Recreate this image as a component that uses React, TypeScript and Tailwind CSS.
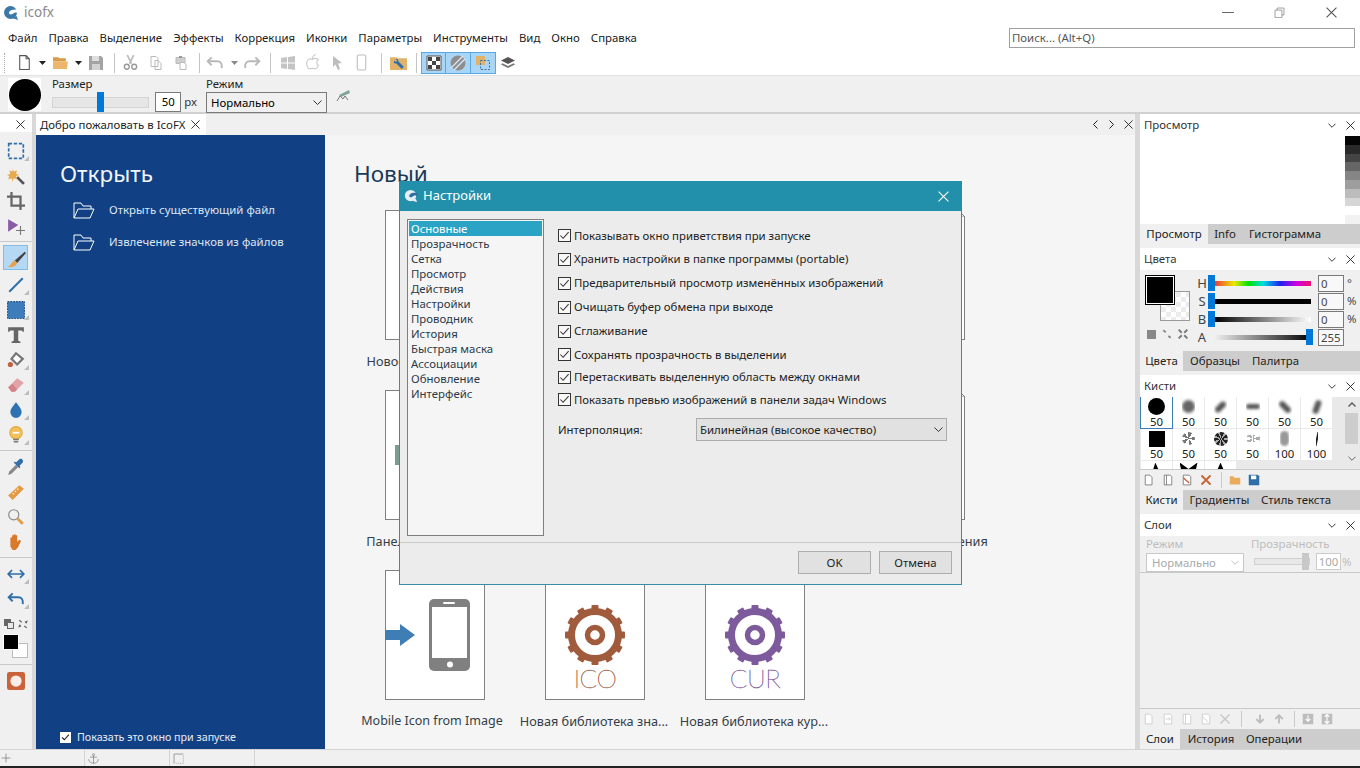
import type { ReactNode } from 'react';

const FONT = "font-['Noto_Sans','Open_Sans',sans-serif]";

function Svg({ size = 16, className = '', children }: { size?: number; className?: string; children: ReactNode }) {
  return (
    <svg width={size} height={size} viewBox="0 0 16 16" fill="none" className={`shrink-0 ${className}`}>
      {children}
    </svg>
  );
}

function CloseX({ size = 10, color = '#222' }: { size?: number; color?: string }) {
  return (
    <svg width={size} height={size} viewBox="0 0 10 10" className="shrink-0">
      <path d="M0.5 0.5L9.5 9.5M9.5 0.5L0.5 9.5" stroke={color} strokeWidth="1" />
    </svg>
  );
}

function Chevron({ w = 9, color = '#333' }: { w?: number; color?: string }) {
  return (
    <svg width={w} height={5} viewBox="0 0 9 5" className="shrink-0">
      <path d="M0.5 0.5L4.5 4.5L8.5 0.5" stroke={color} fill="none" strokeWidth="1" />
    </svg>
  );
}

function Logo({ size = 16, body = '#3a78a8', wave = '#fff' }: { size?: number; body?: string; wave?: string }) {
  return (
    <svg width={size} height={size} viewBox="0 0 16 16" className="shrink-0">
      <circle cx="7.500" cy="7.500" r="6.500" fill={body} />
      <path d="M6 7c2-3 6-3 10-2v3c-3-1-5-.5-6.500 1C8 10 5.500 9.500 6 7z" fill={wave} />
      <path d="M9 13l6 2-1.500-4z" fill={body} />
    </svg>
  );
}

function Sep() {
  return <div className="w-px h-[20px] bg-[#c4c4c4] shrink-0" />;
}

function Caret({ color = '#222' }: { color?: string }) {
  return (
    <svg width="7" height="4" viewBox="0 0 7 4" className="shrink-0">
      <path d="M0 0h7L3.500 4z" fill={color} />
    </svg>
  );
}

function Slot({ w = 25, children, cls = '' }: { w?: number; children: ReactNode; cls?: string }) {
  return (
    <div className={`flex items-center justify-center h-[22px] shrink-0 ${cls}`} style={{ width: w }}>
      {children}
    </div>
  );
}

function TopToolbar() {
  const dis = '#b9b9b9';
  return (
    <div className="h-[25px] flex items-center bg-white pl-[4px] shrink-0">
      <div className="w-[2px] h-[20px] border-l border-dotted border-[#aaa] mr-[9px]" />
      <Slot w={18}>
        <Svg size={17}><path d="M3.500 1.500h6l3 3v10h-9z M9.500 1.500v3h3" stroke="#555" fill="#fff" /></Svg>
      </Slot>
      <Slot w={18}><Caret /></Slot>
      <Slot w={18}>
        <Svg size={17}><path d="M1 3h5l1 1h6v3H1z" fill="#d99a4a" /><path d="M1 7h14l-1 7H1z" fill="#edb66b" /></Svg>
      </Slot>
      <Slot w={18}><Caret /></Slot>
      <Slot w={18}>
        <Svg><path d="M1 1h12l2 2v12H1z" fill="#a4a4a4" /><rect x="4" y="1" width="7" height="5" fill="#dedede" /><rect x="4" y="9" width="8" height="6" fill="#d2d2d2" /></Svg>
      </Slot>
      <Slot w={18}><Sep /></Slot>
      <Slot w={15}>
        <Svg size={17}><path d="M5 1l4 8M11 1L7 9" stroke={dis} strokeWidth="1.500" /><circle cx="4.500" cy="12" r="2.300" stroke="#999" strokeWidth="1.300" /><circle cx="11.500" cy="12" r="2.300" stroke="#999" strokeWidth="1.300" /></Svg>
      </Slot>
      <Slot w={25} cls="ml-[5px]">
        <Svg><path d="M3 1.500h5l2 2v8H3z M7 5.500h3l3 3v6H7z" stroke={dis} fill="#fff" /></Svg>
      </Slot>
      <Slot w={25}>
        <Svg><path d="M3 2.500h9v6H3z" fill="#cfcfcf" stroke={dis} /><path d="M6 1h3v2H6z" fill="#999" /><path d="M7 7.500h4l2 2v5H7z" fill="#fff" stroke={dis} /></Svg>
      </Slot>
      <Slot w={12}><Sep /></Slot>
      <Slot w={18} cls="ml-[1px]">
        <Svg size={18}><path d="M5 3L1.500 6.500 5 10M2 6.500h8c3 0 4.500 2 4 6" stroke={dis} strokeWidth="1.700" /></Svg>
      </Slot>
      <Slot w={20}><Caret color="#888" /></Slot>
      <Slot w={16}>
        <Svg size={18}><path d="M11 3l3.500 3.500L11 10M14 6.500H6c-3 0-4.500 2-4 6" stroke={dis} strokeWidth="1.700" /></Svg>
      </Slot>
      <Slot w={20}><Sep /></Slot>
      <Slot w={25} cls="ml-[-5px]">
        <Svg><path d="M1 3l6-1v5.500H1zM8 2l7-1v6.500H8zM1 8.500h6V14l-6-1zM8 8.500h7V15l-7-1z" fill="#c4c4c4" /></Svg>
      </Slot>
      <Slot w={25}>
        <Svg size={17}><path d="M8 5C6 4 3 5 2.500 8c-.3 3 1.500 6 3 6 1 0 1.500-.5 2.500-.5s1.500.5 2.500.5c1.200 0 2.300-1.500 3-3.500-2-1-2-4 0-5-1-1.500-3.500-1.500-5.500-.5zM8 4.500c0-2 1-3.500 3-4" stroke="#c8c8c8" /></Svg>
      </Slot>
      <Slot w={24}>
        <Svg><path d="M4 1l9 7-4 .5 2 5.500-2 1-2.500-5.500L4 12z" fill="#bdbdbd" /></Svg>
      </Slot>
      <Slot w={25}>
        <Svg size={17}><rect x="4" y="1" width="8" height="14" rx="1.500" stroke="#bbb" fill="#fff" /></Svg>
      </Slot>
      <Slot w={14}><Sep /></Slot>
      <Slot w={18} cls="ml-[1px]">
        <Svg size={17}><path d="M0 3h6l1 1h9v11H0z" fill="#e0b26a" /><path d="M5 5c2-1 3 0 3 2l5 5-2 2-5-5c-2 0-3-1-2-3l1.500 1.500L7 6z" fill="#2f6ea8" /></Svg>
      </Slot>
      <Slot w={18}><Sep /></Slot>
      <div className="flex h-[22px] w-[75px] border border-[#5aa7e6] bg-[#a9d5f7] ml-[-4px] shrink-0">
        <div className="w-[25px] flex items-center justify-center border-r border-[#5aa7e6]">
          <Svg><path d="M1 1h14v14H1z" fill="#fff" stroke="#555" /><path d="M2 2h4v4H2zM10 2h4v4h-4zM6 6h4v4H6zM2 10h4v4H2zM10 10h4v4h-4z" fill="#444" /></Svg>
        </div>
        <div className="w-[25px] flex items-center justify-center border-r border-[#5aa7e6]">
          <Svg><circle cx="8" cy="8" r="7.500" fill="#8e8e8e" /><path d="M1 13L13 1M4 15L15 4" stroke="#d9ecfb" strokeWidth="1.200" /></Svg>
        </div>
        <div className="w-[25px] flex items-center justify-center">
          <Svg><rect x="1" y="1" width="9" height="9" fill="#e0b26a" /><rect x="5.500" y="5.500" width="9" height="9" stroke="#3f6f9f" strokeDasharray="2 1.500" /></Svg>
        </div>
      </div>
      <Slot w={24}>
        <Svg><path d="M8 2l7 3.500L8 9 1 5.500z" fill="#555" /><path d="M2.500 8.300L1 9.500 8 13l7-3.500-1.500-1.200L8 11z" fill="#777" /></Svg>
      </Slot>
    </div>
  );
}

function ToolOptions() {
  return (
    <div className="h-[39px] bg-[#f0f0f0] border-t border-[#e2e2e2] border-b-2 border-b-[#d0d0d0] flex pl-[8px] shrink-0">
      <div className="w-[33px] h-[33px] mt-[2px] bg-white flex items-center justify-center shrink-0">
        <div className="w-[32px] h-[32px] rounded-full bg-black" />
      </div>
      <div className="ml-[11px] w-[145px] shrink-0">
        <div className="text-[11.4px] leading-[14px] mt-[1px] text-[#222]">Размер</div>
        <div className="flex items-center mt-[1px]">
          <div className="relative w-[98px] h-[11px] bg-[#e6e6e6] border border-[#d4d4d4]">
            <div className="absolute left-[44px] top-[-6px] w-[7px] h-[20px] bg-[#0078d7]" />
          </div>
          <div className="ml-[6px] w-[26px] h-[20px] border border-[#7a7a7a] bg-white text-[11.4px] leading-[18px] text-center">50</div>
          <div className="ml-[3px] text-[11.4px] text-[#333]">px</div>
        </div>
      </div>
      <div className="ml-[9px] w-[121px] shrink-0">
        <div className="text-[11.4px] leading-[14px] mt-[1px] text-[#222]">Режим</div>
        <div className="mt-[1px] h-[21px] border border-[#7a7a7a] bg-[#f0f0f0] flex items-center justify-between pl-[4px] pr-[4px] text-[11.4px]">
          <span>Нормально</span>
          <Chevron />
        </div>
      </div>
      <div className="ml-[9px] mt-[11px]">
        <Svg>
          <path d="M1 14l3-5 3 3 2-3 3 4" stroke="#777" />
          <path d="M3 8l10-5 1 3-9 4z" fill="#7fa596" />
        </Svg>
      </div>
    </div>
  );
}

function LeftTools() {
  const Tool = ({ children, corner = false, active = false, h = 25 }: { children: ReactNode; corner?: boolean; active?: boolean; h?: number }) => (
    <div className="relative flex items-center justify-center shrink-0 w-full" style={{ height: h }}>
      {active && <div className="absolute left-[3px] top-0 w-[25px] h-[25px] bg-[#b5d9f5] border border-[#7ebcea]" />}
      <div className="relative">{children}</div>
      {corner && <div className="absolute right-[3px] bottom-[2px] w-0 h-0 border-l-[5px] border-l-transparent border-b-[5px] border-b-[#bcbcbc]" />}
    </div>
  );
  const Line = () => <div className="h-px my-[3px] bg-[#c9c9c9] shrink-0" />;
  return (
    <div className="w-[36px] shrink-0 flex flex-col bg-[#f0f0f0] border-r-4 border-[#d8d8d8]">
      <div className="h-[18px] bg-white flex items-center justify-center pl-[8px] pt-[3px] shrink-0">
        <CloseX size={9} />
      </div>
      <div className="h-[6px] shrink-0" />
      <Tool corner><Svg size={18}><rect x="1.500" y="1.500" width="13" height="13" stroke="#2f6ea8" strokeWidth="1.500" strokeDasharray="3 1.500" /></Svg></Tool>
      <Tool>
        <Svg size={18}><path d="M9 9l6 6" stroke="#555" strokeWidth="2.500" /><path d="M5 1l1 3 3-1-1 3 3 1-3 1 1 3-3-1-1 3-1-3-3 1 1-3-2-1 3-1-1-3 3 1z" fill="#e9a94f" /></Svg>
      </Tool>
      <Tool>
        <Svg size={18}><path d="M4 0v12h12M0 4h12v12" stroke="#666" strokeWidth="2" /></Svg>
      </Tool>
      <Tool>
        <Svg size={18}><path d="M1 2l9 5-9 6z" fill="#8a5aa8" /><path d="M12 8v8M8 12h8" stroke="#777" /></Svg>
      </Tool>
      <Line />
      <Tool active corner={false}>
        <Svg size={20}><path d="M7 10L15 3l1 1-7 8z" fill="#444" /><path d="M1 15c3 0 3-4 6-5l2 2c-1 3-5 4-8 3z" fill="#e5a050" /></Svg>
      </Tool>
      <div className="h-[2px] shrink-0" />
      <Tool corner><Svg size={18}><path d="M2 14L14 2" stroke="#2f6ea8" strokeWidth="1.700" /></Svg></Tool>
      <Tool corner><Svg size={18}><rect x="0.500" y="0.500" width="15" height="15" fill="#3f7cbc" stroke="#1f4f86" strokeDasharray="1.500 1" /></Svg></Tool>
      <Tool><Svg size={18}><path d="M1 1h14v4h-1l-1-1H10v9l2 1v1H4v-1l2-1V4H3L2 5H1z" fill="#666" /></Svg></Tool>
      <Tool corner><Svg size={18}><path d="M8 2l6 5-5 5-5-5z" fill="#fff" stroke="#777" strokeWidth="2" /><circle cx="3" cy="12" r="2.300" fill="#c5603c" /></Svg></Tool>
      <Tool corner><Svg size={18}><path d="M1 10l8-8 6 4-8 8H4z" fill="#e2a3a8" /><path d="M1 10l3 4h3l2-2-4-5z" fill="#d08488" /></Svg></Tool>
      <Tool corner><Svg size={18}><path d="M8 1c3 4 5 6 5 9a5 5 0 0 1-10 0c0-3 2-5 5-9z" fill="#2f72b2" /></Svg></Tool>
      <Tool corner>
        <Svg size={18}><circle cx="8" cy="6" r="5.500" fill="#f1c15b" stroke="#e0a93c" /><path d="M5 6h6" stroke="#fff" strokeWidth="1.500" /><path d="M5.500 12h5M6 14h4" stroke="#777" strokeWidth="1.500" /></Svg>
      </Tool>
      <Line />
      <Tool><Svg size={18}><path d="M1 15l1-3 6-6 2 2-6 6z" fill="#888" /><path d="M8 4l3-3c2-1 4 1 3 3l-3 3 1 1-1 1-5-5 1-1z" fill="#2f6ea8" /></Svg></Tool>
      <Tool><Svg size={18}><path d="M1 11L11 2l4 3-10 10z" fill="#e29a45" /><path d="M5 9l1 1M7 7l1 1M9 5l1 1" stroke="#fff" /></Svg></Tool>
      <Tool><Svg size={18}><circle cx="6" cy="6" r="4.500" stroke="#888" /><path d="M9.500 9.500L14 14" stroke="#e29a45" strokeWidth="2.500" /></Svg></Tool>
      <Tool><Svg size={18}><path d="M3 8V4h1.500v3V2H6v5V1h1.500v6V2H9v6l2-2 1.500 1-3 6-2 2H5l-2-3z" fill="#d9792c" /></Svg></Tool>
      <Line />
      <Tool corner><Svg size={18}><path d="M1 8h14M4.500 4.500L1 8l3.500 3.500M11.500 4.500L15 8l-3.500 3.500" stroke="#2f6ea8" strokeWidth="1.500" /></Svg></Tool>
      <Tool corner><Svg size={18}><path d="M5 3L1.500 6.500 5 10M2 6.500h8c3 0 4.500 2 4 6" stroke="#2f6ea8" strokeWidth="1.700" /></Svg></Tool>
      <div className="relative h-[50px] shrink-0">
        <div className="absolute left-[4px] top-[8px] w-[7px] h-[7px] bg-[#666]" />
        <div className="absolute left-[7px] top-[11px] w-[7px] h-[7px] bg-[#e8e8e8] border border-[#666]" />
        <div className="absolute left-[18px] top-[8px]">
          <Svg size={10}><path d="M2 2l4 3M14 14l-4-3M3 9l-1 3 3-1M13 7l1-3-3 1" stroke="#666" strokeWidth="2" /></Svg>
        </div>
        <div className="absolute left-[12px] top-[32px] w-[16px] h-[15px] bg-white border border-[#bbb]" />
        <div className="absolute left-[3px] top-[23px] w-[16px] h-[16px] bg-black border border-white" />
      </div>
      <Line />
      <Tool>
        <svg width="18" height="18" viewBox="0 0 16 16"><rect x="0" y="0" width="16" height="16" rx="2" fill="#c9633a" /><circle cx="8" cy="8" r="5" fill="#fbeee8" /></svg>
      </Tool>
    </div>
  );
}

function Gear({ color }: { color: string }) {
  const teeth = [0, 30, 60, 90, 120, 150, 180, 210, 240, 270, 300, 330];
  return (
    <svg width="62" height="62" viewBox="0 0 62 62" className="shrink-0">
      {teeth.map((a) => (
        <rect key={a} x="27.500" y="1" width="7" height="8" rx="1" fill={color} transform={`rotate(${a} 31 31)`} />
      ))}
      <circle cx="31" cy="31" r="23.500" fill="none" stroke={color} strokeWidth="7" />
      <circle cx="31" cy="31" r="7.500" fill="none" stroke={color} strokeWidth="5.500" />
    </svg>
  );
}

function Card({ label, latin = false, children }: { label?: string; latin?: boolean; children?: ReactNode }) {
  return (
    <div className="w-[100px]">
      <div className="relative w-[100px] h-[130px] bg-white border border-[#808080] flex flex-col items-center">
        <div className="absolute right-[-1px] top-[-1px] w-[7px] h-[7px] bg-[#f5f5f5]" />
        <svg width="7" height="7" viewBox="0 0 7 7" className="absolute right-[-1px] top-[-1px]">
          <path d="M0 0L7 7H0z" fill="#fff" />
          <path d="M0 0L7 7M0 0V7H7" stroke="#808080" fill="none" />
        </svg>
        {children}
      </div>
      {label && (
        <div className={`w-[160px] mt-[12px] text-center leading-[18px] text-[#333e48] whitespace-nowrap ${latin ? 'ml-[-33px] text-[12.5px]' : 'ml-[-31px] text-[12.7px]'}`}>{label}</div>
      )}
    </div>
  );
}

function Welcome() {
  const Folder = () => (
    <svg width="22" height="17" viewBox="0 0 22 17" className="shrink-0">
      <path d="M1 16V1h7l2 3h8v3M1 16l4-9h16l-4 9z" fill="none" stroke="#fff" strokeWidth="1" />
    </svg>
  );
  return (
    <div className="flex-1 flex min-h-0">
      <div className="w-[289px] bg-[#114084] shrink-0 flex flex-col text-white pl-[24px]">
        <div className="text-[22.5px] leading-[32px] mt-[23px] text-[#f2f6fb]">Открыть</div>
        <div className="flex items-center mt-[10px] ml-[13px] h-[20px]">
          <Folder />
          <span className="ml-[14px] text-[11.4px] text-[#dde6f2]">Открыть существующий файл</span>
        </div>
        <div className="flex items-center mt-[12px] ml-[13px] h-[20px]">
          <Folder />
          <span className="ml-[14px] text-[11.4px] text-[#dde6f2]">Извлечение значков из файлов</span>
        </div>
        <div className="mt-auto mb-[3px] flex items-center h-[18px]">
          <div className="w-[11px] h-[11px] bg-white flex items-center justify-center">
            <Svg size={9}><path d="M2 8l4 4 8-9" stroke="#222" strokeWidth="2" /></Svg>
          </div>
          <span className="ml-[6px] text-[10.7px] text-[#e6ecf5]">Показать это окно при запуске</span>
        </div>
      </div>
      <div className="flex-1 bg-[#f5f5f5] pl-[29px]">
        <div className="text-[22.5px] leading-[32px] mt-[23px] text-[#173a55]">Новый</div>
        <div className="mt-[20px] ml-[31px] grid grid-cols-[100px_100px_100px_100px] gap-x-[60px] gap-y-[20px] overflow-visible">
          <Card label="Новое изображение..." />
          <Card />
          <Card />
          <Card />
          <Card label="Панель инструментов">
            <div className="absolute left-[9px] top-[54px] w-[6px] h-[20px] bg-[#7a9c8f]" />
          </Card>
          <Card />
          <Card />
          <Card label="Значок из изображения" />
          <Card label="Mobile Icon from Image" latin>
            <svg width="100" height="128" viewBox="0 0 100 128">
              <path d="M0 59h15v-6l15 11-15 11v-6H0z" fill="#3f7db5" />
              <rect x="44" y="28" width="41" height="72" rx="5" fill="#808080" />
              <rect x="47" y="36" width="35" height="51" fill="#fff" />
              <rect x="58" y="31" width="12" height="2" rx="1" fill="#fff" />
              <circle cx="65" cy="93.500" r="3" fill="#fff" />
            </svg>
          </Card>
          <Card label="Новая библиотека зна...">
            <div className="mt-[33px]"><Gear color="#a05a3c" /></div>
            <div className="font-['Lato',sans-serif] font-thin text-[26px] leading-[28px] mt-[-2px] text-[#a05a3c] tracking-[-0.5px] [-webkit-text-stroke:0.4px_#a05a3c]">ICO</div>
          </Card>
          <Card label="Новая библиотека кур...">
            <div className="mt-[33px]"><Gear color="#7d5a9c" /></div>
            <div className="font-['Lato',sans-serif] font-thin text-[26px] leading-[28px] mt-[-2px] text-[#7d5a9c] tracking-[-0.5px] [-webkit-text-stroke:0.4px_#7d5a9c]">CUR</div>
          </Card>
        </div>
      </div>
    </div>
  );
}

function PanelHead({ title }: { title: string }) {
  return (
    <div className="h-[22px] bg-white flex items-center pl-[4px] pr-[5px] shrink-0">
      <span className="text-[11.4px] text-[#333] flex-1">{title}</span>
      <Chevron w={8} color="#222" />
      <div className="w-[10px]" />
      <CloseX size={9} />
    </div>
  );
}

function PanelTabs({ tabs, widths }: { tabs: string[]; widths: number[] }) {
  return (
    <div className="h-[20px] bg-[#cdcdcd] flex shrink-0 text-[11.4px] leading-[20px] text-[#222]">
      {tabs.map((t, i) => (
        <div key={t} className={`text-center whitespace-nowrap ${i === 0 ? 'bg-[#f0f0f0]' : ''}`} style={{ width: widths[i] }}>
          {t}
        </div>
      ))}
    </div>
  );
}

function ColorRow({ label, thumb, bar, value, unit }: { label: string; thumb: number; bar: string; value: string; unit: string }) {
  return (
    <div className="flex items-center h-[18px]">
      <div className="w-[14px] text-[13px] text-[#444] ml-[55px] text-center leading-[18px]">{label}</div>
      <div className="relative w-[96px] h-[5px] ml-[6px] shrink-0" style={{ background: bar }}>
        <div className="absolute top-[-6px] w-[7px] h-[16px] bg-[#0078d7]" style={{ left: thumb }} />
      </div>
      <div className="ml-[7px] w-[26px] h-[17px] border border-[#7a7a7a] bg-[#f8f8f8] text-[11.4px] leading-[16px] pl-[2px] text-[#444]">{value}</div>
      <div className="ml-[3px] text-[11.4px] text-[#444]">{unit}</div>
    </div>
  );
}

function Brush({ n, children, sel }: { n?: number; children: ReactNode; sel?: boolean }) {
  return (
    <div className={`w-[31px] h-[31px] bg-white flex flex-col items-center ${sel ? 'outline outline-1 outline-[#3a7dbd]' : ''}`}>
      <div className="h-[19px] flex items-center justify-center overflow-hidden">{children}</div>
      {n !== undefined && <div className="text-[11.4px] leading-[12px] text-[#222]">{n}</div>}
    </div>
  );
}

function RightPanels() {
  const grays = ['#050505', '#2a2a2a', '#444', '#666', '#858585', '#9e9e9e', '#bcbcbc', '#d6d6d6', '#fff', '#f2f2f2'];
  return (
    <div className="w-[225px] shrink-0 flex flex-col border-l-[5px] border-[#d8d8d8] bg-[#f0f0f0]">
      {/* просмотр */}
      <PanelHead title="Просмотр" />
      <div className="h-[88px] bg-white flex justify-end shrink-0">
        <div className="w-[15px] flex flex-col">
          {grays.map((g, i) => (
            <div key={i} className="h-[9px]" style={{ background: g }} />
          ))}
        </div>
      </div>
      <PanelTabs tabs={['Просмотр', 'Info', 'Гистограмма']} widths={[68, 34, 86]} />
      <div className="h-[4px] shrink-0" />

      {/* цвета */}
      <PanelHead title="Цвета" />
      <div className="relative h-[81px] py-[4px] shrink-0">
        <div className="absolute left-[20px] top-[21px] w-[30px] h-[30px] border border-[#999] bg-[repeating-conic-gradient(#ececec_0_25%,#fff_0_50%)] bg-[length:10px_10px]" />
        <div className="absolute left-[5px] top-[5px] w-[30px] h-[30px] border border-black bg-white p-px">
          <div className="w-full h-full bg-black" />
        </div>
        <div className="absolute left-[7px] top-[59px] flex gap-[6px] items-center">
          <div className="w-[9px] h-[9px] bg-[#888]" />
          <Svg size={10}><path d="M2 2l4 3M14 14l-4-3" stroke="#888" strokeWidth="3" /></Svg>
          <Svg size={10}><path d="M1 1l5 5M15 1l-5 5M1 15l5-5M15 15l-5-5" stroke="#777" strokeWidth="3" /></Svg>
        </div>
        <ColorRow label="H" thumb={-7} value="0" unit="°" bar="linear-gradient(90deg,#f03a3a,#e8e800 20%,#00e000 35%,#00e0e0 50%,#2020f0 68%,#d000e0 85%,#f01070)" />
        <ColorRow label="S" thumb={-7} value="0" unit="%" bar="#000" />
        <ColorRow label="B" thumb={-7} value="0" unit="%" bar="linear-gradient(90deg,#000,#fff)" />
        <ColorRow label="A" thumb={91} value="255" unit="" bar="linear-gradient(90deg,#eee,#000)" />
      </div>
      <PanelTabs tabs={['Цвета', 'Образцы', 'Палитра']} widths={[43, 64, 57]} />
      <div className="h-[4px] shrink-0" />

      {/* кисти */}
      <PanelHead title="Кисти" />
      <div className="flex h-[73px] bg-[#e9e9e9] border-b border-[#c9c9c9] shrink-0 overflow-hidden">
        <div className="w-[205px] pl-[1px] grid grid-cols-[31px_31px_31px_31px_31px_31px] gap-x-px gap-y-px content-start">
          <Brush n={50} sel><div className="w-[17px] h-[17px] rounded-full bg-black" /></Brush>
          <Brush n={50}><div className="w-[13px] h-[13px] rounded-full bg-[#666] blur-[1.5px]" /></Brush>
          <Brush n={50}><div className="w-[13px] h-[6px] rounded-full bg-[#555] blur-[1.5px] -rotate-45" /></Brush>
          <Brush n={50}><div className="w-[14px] h-[5px] rounded-full bg-[#555] blur-[1.5px]" /></Brush>
          <Brush n={50}><div className="w-[14px] h-[6px] rounded-full bg-[#555] blur-[1.5px] rotate-45" /></Brush>
          <Brush n={50}><div className="w-[14px] h-[6px] rounded-full bg-[#555] blur-[1.5px] -rotate-[70deg]" /></Brush>
          <Brush n={50}><div className="w-[16px] h-[16px] bg-black" /></Brush>
          <Brush n={50}><div className="w-[13px] h-[13px] rounded-full bg-[repeating-conic-gradient(#777_0_10%,#fff_0_20%)] blur-[0.5px]" /></Brush>
          <Brush n={50}><div className="w-[14px] h-[14px] rounded-full bg-[repeating-conic-gradient(#222_0_8%,#aaa_0_14%)] blur-[0.5px]" /></Brush>
          <Brush n={50}><div className="w-[14px] h-[7px] rounded-full bg-[repeating-conic-gradient(#aaa_0_10%,#fff_0_20%)]" /></Brush>
          <Brush n={100}><div className="w-[9px] h-[15px] rounded-full bg-[#999] blur-[1px]" /></Brush>
          <Brush n={100}><div className="w-[2px] h-[14px] bg-[#222] rotate-12" /></Brush>
          <Brush><div className="w-[12px] h-[16px] bg-black [clip-path:polygon(40%_0,100%_100%,0_100%)]" /></Brush>
          <Brush><div className="w-[18px] h-[16px] bg-black [clip-path:polygon(0_0,50%_40%,100%_0,80%_100%,20%_100%)]" /></Brush>
          <Brush><div className="w-[14px] h-[16px] bg-black [clip-path:polygon(50%_0,100%_100%,0_100%)]" /></Brush>
        </div>
        <div className="w-[13px] flex flex-col items-center pt-[5px]">
          <svg width="8" height="5" viewBox="0 0 8 5" className="shrink-0"><path d="M0.5 4.500L4 1l3.500 3.500" stroke="#555" strokeWidth="1.300" fill="none" /></svg>
          <div className="w-[13px] h-[31px] bg-[#cdcdcd] mt-[6px]" />
          <div className="mt-[12px]"><Chevron w={8} color="#555" /></div>
        </div>
      </div>
      <div className="h-[20px] flex items-center pl-[3px] gap-[7px] shrink-0">
        <Svg size={12}><path d="M3 1.500h6l3 3v10H3z" stroke="#666" fill="#fff" /></Svg>
        <Svg size={12}><path d="M3 1.500h8l2 2v11H3zM6 1.500v13" stroke="#666" fill="#fff" /></Svg>
        <Svg size={12}><path d="M3 1.500h8l2 2v11H3z" stroke="#666" fill="#fff" /><path d="M3 5l8 7" stroke="#c9633a" strokeWidth="2" /></Svg>
        <Svg size={12}><path d="M2 2l12 12M14 2L2 14" stroke="#c9633a" strokeWidth="2.500" /></Svg>
        <div className="w-px h-[16px] bg-[#c9c9c9] ml-[2px]" />
        <Svg size={12}><path d="M1 3h5l1 2h8v9H1z" fill="#e8ac5c" /></Svg>
        <Svg size={12}><path d="M1 1h12l2 2v12H1z" fill="#2f6ea8" /><rect x="4" y="2" width="7" height="5" fill="#fff" /></Svg>
      </div>
      <PanelTabs tabs={['Кисти', 'Градиенты', 'Стиль текста']} widths={[43, 73, 80]} />
      <div className="h-[4px] shrink-0" />

      {/* слои */}
      <PanelHead title="Слои" />
      <div className="flex h-[37px] border-b border-[#c9c9c9] shrink-0 text-[11.4px] text-[#bdbdbd]">
        <div className="ml-[6px] w-[98px]">
          <div className="leading-[14px] mt-[1px]">Режим</div>
          <div className="h-[19px] mt-[2px] border border-[#c8c8c8] bg-white flex items-center justify-between pl-[5px] pr-[4px] text-[#aaa]">
            <span>Нормально</span>
            <Chevron w={8} color="#bbb" />
          </div>
        </div>
        <div className="ml-[7px]">
          <div className="leading-[14px] mt-[1px]">Прозрачность</div>
          <div className="flex items-center mt-[2px]">
            <div className="relative w-[56px] h-[7px] ml-[3px] bg-[#e8e8e8] border border-[#d0d0d0]">
              <div className="absolute right-0 top-[-6px] w-[7px] h-[17px] bg-[#c8c8c8]" />
            </div>
            <div className="ml-[6px] w-[25px] h-[17px] border border-[#ccc] bg-white leading-[15px] text-center text-[#aaa]">100</div>
            <div className="ml-[1px]">%</div>
          </div>
        </div>
      </div>
      <div className="flex-1 border-b border-[#c9c9c9]" />
      <div className="h-[20px] flex items-center pl-[3px] gap-[7px] shrink-0">
        <Svg size={12}><path d="M3 1.500h6l3 3v10H3z" stroke="#c4c4c4" fill="#fff" /></Svg>
        <Svg size={12}><path d="M3 1.500h8l2 2v11H3zM5 8h6M9 6l2 2-2 2" stroke="#c4c4c4" fill="#fff" /></Svg>
        <Svg size={12}><path d="M3 1.500h8l2 2v11H3zM6 1.500v13" stroke="#c4c4c4" fill="#fff" /></Svg>
        <Svg size={12}><path d="M3 1.500h8l2 2v11H3zM3 5l8 7" stroke="#c4c4c4" fill="#fff" /></Svg>
        <Svg size={12}><path d="M2 2l12 12M14 2L2 14" stroke="#c8c8c8" strokeWidth="2" /></Svg>
        <div className="w-px h-[16px] bg-[#c9c9c9] ml-[3px] mr-[5px]" />
        <Svg size={12}><path d="M8 2v11M3 8l5 5 5-5" stroke="#bdbdbd" strokeWidth="2.500" /></Svg>
        <Svg size={12}><path d="M8 14V3M3 8l5-5 5 5" stroke="#bdbdbd" strokeWidth="2.500" /></Svg>
        <div className="w-px h-[16px] bg-[#c9c9c9] ml-[2px]" />
        <Svg size={12}><rect x="1" y="1" width="14" height="14" fill="#bdbdbd" /><path d="M8 3v8M5 8l3 3 3-3" stroke="#fff" strokeWidth="1.500" /></Svg>
        <Svg size={12}><rect x="1" y="1" width="14" height="14" fill="#bdbdbd" /><path d="M8 3v10M5 5l3-3 3 3M5 11l3 3 3-3" stroke="#fff" strokeWidth="1.500" /></Svg>
      </div>
      <PanelTabs tabs={['Слои', 'История', 'Операции']} widths={[40, 62, 64]} />
    </div>
  );
}

function SettingsDialog() {
  const sections = ['Основные', 'Прозрачность', 'Сетка', 'Просмотр', 'Действия', 'Настройки', 'Проводник', 'История', 'Быстрая маска', 'Ассоциации', 'Обновление', 'Интерфейс'];
  const opts = [
    'Показывать окно приветствия при запуске',
    'Хранить настройки в папке программы (portable)',
    'Предварительный просмотр изменённых изображений',
    'Очищать буфер обмена при выходе',
    'Сглаживание',
    'Сохранять прозрачность в выделении',
    'Перетаскивать выделенную область между окнами',
    'Показать превью изображений в панели задач Windows',
  ];
  return (
    <div className="absolute left-[399px] top-[181px] w-[563px] h-[404px] bg-[#ececec] border border-[#3a8ca6] flex flex-col text-[11.4px] text-[#222]">
      <div className="h-[30px] bg-[#2290ab] flex items-center pl-[5px] pr-[13px] shrink-0 ml-[-1px] mr-[-1px] mt-[-1px] text-white">
        <Logo size={14} body="#e8eef4" wave="#2f6fa0" />
        <span className="ml-[5px] text-[13px]">Настройки</span>
        <div className="flex-1" />
        <CloseX size={11} color="#fff" />
      </div>
      <div className="flex-1 flex pl-[7px] pt-[8px] min-h-0">
        <div className="w-[137px] h-[317px] border border-[#7f7f7f] bg-[#f5f5f5] p-[1px] shrink-0 leading-[15px] text-[#2b3a48]">
          {sections.map((s, i) => (
            <div key={s} className={`pl-[2px] ${i === 0 ? 'bg-[#2aa3c4] text-white' : ''}`}>{s}</div>
          ))}
        </div>
        <div className="ml-[14px] flex-1 pr-[14px]">
          <div className="flex flex-col pt-[5px]">
            {opts.map((o, i) => (
              <div key={o} className={`flex items-center ${i === 0 || i === 5 ? 'h-[23px]' : i === 6 ? 'h-[22px]' : i === 7 ? 'h-[23px]' : 'h-[24px]'}`}>
                <div className="w-[13px] h-[13px] border border-[#333] bg-[#f8f8f8] flex items-center justify-center shrink-0">
                  <Svg size={11}><path d="M2 8l4 4 8-9" stroke="#333" strokeWidth="1.500" /></Svg>
                </div>
                <span className="ml-[3px] whitespace-nowrap">{o}</span>
              </div>
            ))}
          </div>
          <div className="flex items-center mt-[7px]">
            <span className="w-[138px]">Интерполяция:</span>
            <div className="w-[251px] h-[23px] bg-[#e1e1e1] border border-[#acacac] flex items-center justify-between pl-[3px] pr-[3px]">
              <span>Билинейная (высокое качество)</span>
              <Chevron />
            </div>
          </div>
        </div>
      </div>
      <div className="h-[42px] border-t border-[#c9c9c9] flex justify-end items-start gap-[8px] pr-[9px] pt-[8px] shrink-0">
        <div className="w-[73px] h-[23px] bg-[#e1e1e1] border border-[#adadad] text-center leading-[21px]">OK</div>
        <div className="w-[73px] h-[23px] bg-[#e1e1e1] border border-[#adadad] text-center leading-[21px]">Отмена</div>
      </div>
    </div>
  );
}

export default function App() {
  const menu = ['Файл', 'Правка', 'Выделение', 'Эффекты', 'Коррекция', 'Иконки', 'Параметры', 'Инструменты', 'Вид', 'Окно', 'Справка'];
  return (
    <div className={`relative w-[1360px] h-[768px] overflow-hidden bg-white flex flex-col ${FONT}`}>
      {/* title bar */}
      <div className="h-[26px] flex items-center pl-[3px] pb-[1px] shrink-0">
        <Logo />
        <span className="ml-[5px] text-[13.5px] text-[#8b8b8b]">icofx</span>
        <div className="flex-1" />
        <div className="w-[12px] h-px bg-[#666]" />
        <div className="ml-[40px]">
          <Svg size={11}><path d="M1.500 4.500h10v11h-10zM4.500 4.500v-3h10v10h-3" stroke="#777" /></Svg>
        </div>
        <div className="ml-[41px] mr-[23px]"><CloseX size={11} color="#555" /></div>
      </div>
      {/* menu */}
      <div className="h-[24px] flex items-center pl-[8px] pr-[5px] shrink-0 bg-white">
        <div className="flex gap-[11px] text-[11.4px] text-[#222]">
          {menu.map((m) => <span key={m}>{m}</span>)}
        </div>
        <div className="flex-1" />
        <div className="w-[346px] h-[20px] border border-[#a0a0a0] pl-[2px] text-[11.4px] leading-[18px] text-[#555]">Поиск... (Alt+Q)</div>
      </div>
      <TopToolbar />
      <ToolOptions />
      {/* main */}
      <div className="flex-1 flex min-h-0">
        <LeftTools />
        <div className="flex-1 flex flex-col min-w-0">
          <div className="h-[21px] flex bg-[#f0f0f0] items-center shrink-0">
            <div className="w-[170px] h-full bg-white flex items-center pl-[4px] text-[11.4px] text-[#222]">
              <span className="whitespace-nowrap">Добро пожаловать в IcoFX</span>
              <div className="ml-[6px]"><CloseX size={9} /></div>
            </div>
            <div className="flex-1" />
            <svg width="5" height="9" viewBox="0 0 5 9"><path d="M4.500 0.500L0.500 4.500L4.500 8.500" stroke="#222" fill="none" /></svg>
            <div className="w-[11px]" />
            <svg width="5" height="9" viewBox="0 0 5 9"><path d="M0.500 0.500L4.500 4.500L0.500 8.500" stroke="#222" fill="none" /></svg>
            <div className="w-[10px]" />
            <CloseX size={9} />
            <div className="w-[2px]" />
          </div>
          <Welcome />
        </div>
        <RightPanels />
      </div>
      {/* status */}
      <div className="h-[17px] bg-[#f0f0f0] border-t border-[#d4d4d4] flex shrink-0">
        <div className="w-[85px] border-r border-[#d4d4d4] flex items-center pl-[1px]">
          <Svg size={10}><path d="M8 1v14M1 8h14" stroke="#666" /></Svg>
        </div>
        <div className="w-[85px] border-r border-[#d4d4d4] flex items-center pl-[3px]">
          <Svg size={11}><path d="M8 4v11M3 6h10M1 9c0 4 4 6 7 6s7-2 7-6" stroke="#777" /><circle cx="8" cy="2.500" r="1.500" stroke="#777" /></Svg>
        </div>
        <div className="w-[85px] border-r border-[#d4d4d4] flex items-center pl-[3px]">
          <Svg size={11}><path d="M1.500 15V1.500H15" stroke="#777" /><path d="M15 4v11H4" stroke="#777" strokeDasharray="1.500 2" /></Svg>
        </div>
      </div>
      <div className="h-[2px] bg-[#222] shrink-0" />
      <SettingsDialog />
    </div>
  );
}
